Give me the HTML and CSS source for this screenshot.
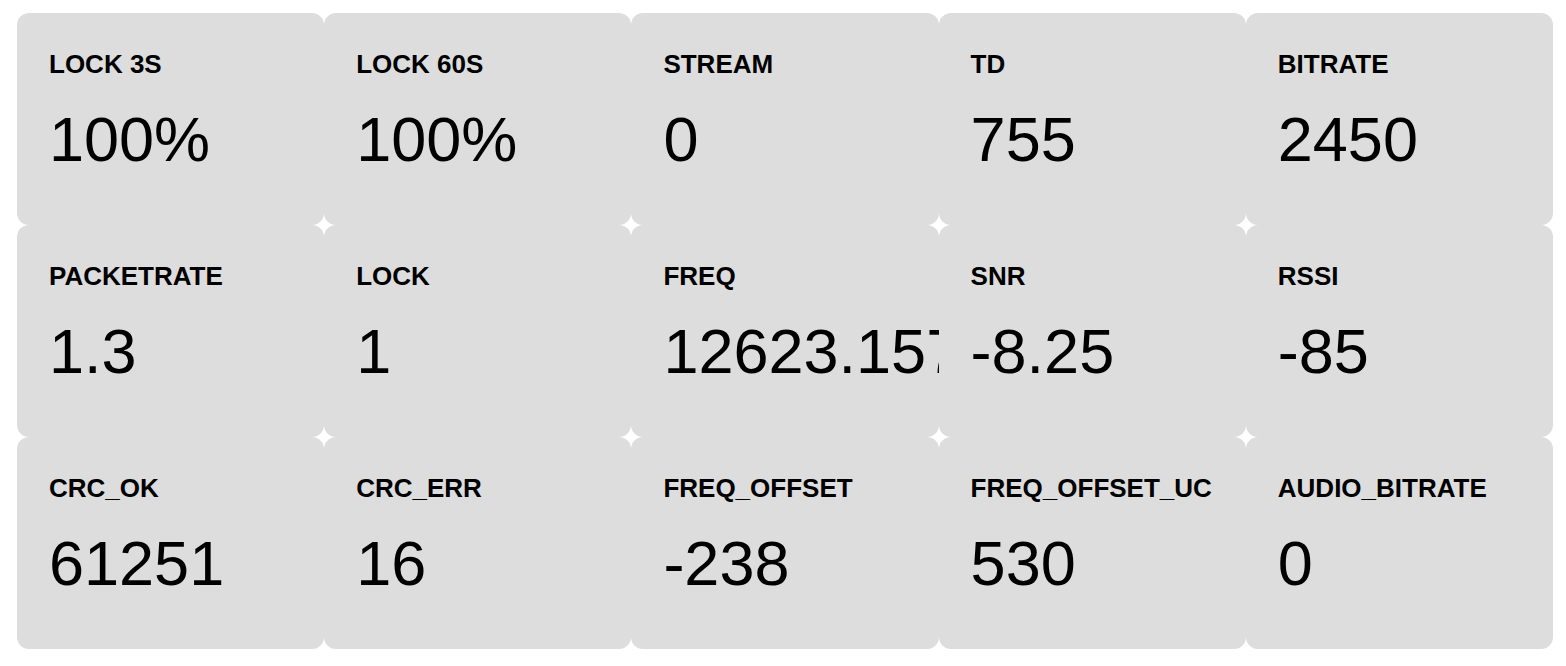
FILE: index.html
```html
<!DOCTYPE html>
<html>
<head>
<meta charset="utf-8">
<link rel="stylesheet" href="styles.css">
</head>
<body>
<div class="grid">
  <div class="card"><div class="label">LOCK 3S</div><div class="value">100%</div></div>
  <div class="card"><div class="label">LOCK 60S</div><div class="value">100%</div></div>
  <div class="card"><div class="label">STREAM</div><div class="value">0</div></div>
  <div class="card"><div class="label">TD</div><div class="value">755</div></div>
  <div class="card"><div class="label">BITRATE</div><div class="value">2450</div></div>
  <div class="card"><div class="label">PACKETRATE</div><div class="value">1.3</div></div>
  <div class="card"><div class="label">LOCK</div><div class="value">1</div></div>
  <div class="card"><div class="label">FREQ</div><div class="value">12623.157</div></div>
  <div class="card"><div class="label">SNR</div><div class="value">-8.25</div></div>
  <div class="card"><div class="label">RSSI</div><div class="value">-85</div></div>
  <div class="card"><div class="label">CRC_OK</div><div class="value">61251</div></div>
  <div class="card"><div class="label">CRC_ERR</div><div class="value">16</div></div>
  <div class="card"><div class="label">FREQ_OFFSET</div><div class="value">-238</div></div>
  <div class="card"><div class="label">FREQ_OFFSET_UC</div><div class="value">530</div></div>
  <div class="card"><div class="label">AUDIO_BITRATE</div><div class="value">0</div></div>
</div>
</body>
</html>
```
FILE: styles.css
```css
html, body {
  margin: 0;
  padding: 0;
  background: #ffffff;
}
body {
  font-family: "Liberation Sans", Arial, Helvetica, sans-serif;
  color: #000000;
  padding: 13px 13px 0 17px;
}
.grid {
  display: grid;
  grid-template-columns: repeat(5, 1fr);
  grid-auto-rows: 212px;
  width: 1536px;
}
.card {
  background: #dddddd;
  border-radius: 12px;
  overflow: hidden;
  padding: 39px 0 0 32px;
  box-sizing: border-box;
  white-space: nowrap;
}
.label {
  font-size: 26px;
  font-weight: bold;
  line-height: 25px;
}
.value {
  font-size: 63px;
  line-height: 62px;
  margin-top: 31px;
}
```
